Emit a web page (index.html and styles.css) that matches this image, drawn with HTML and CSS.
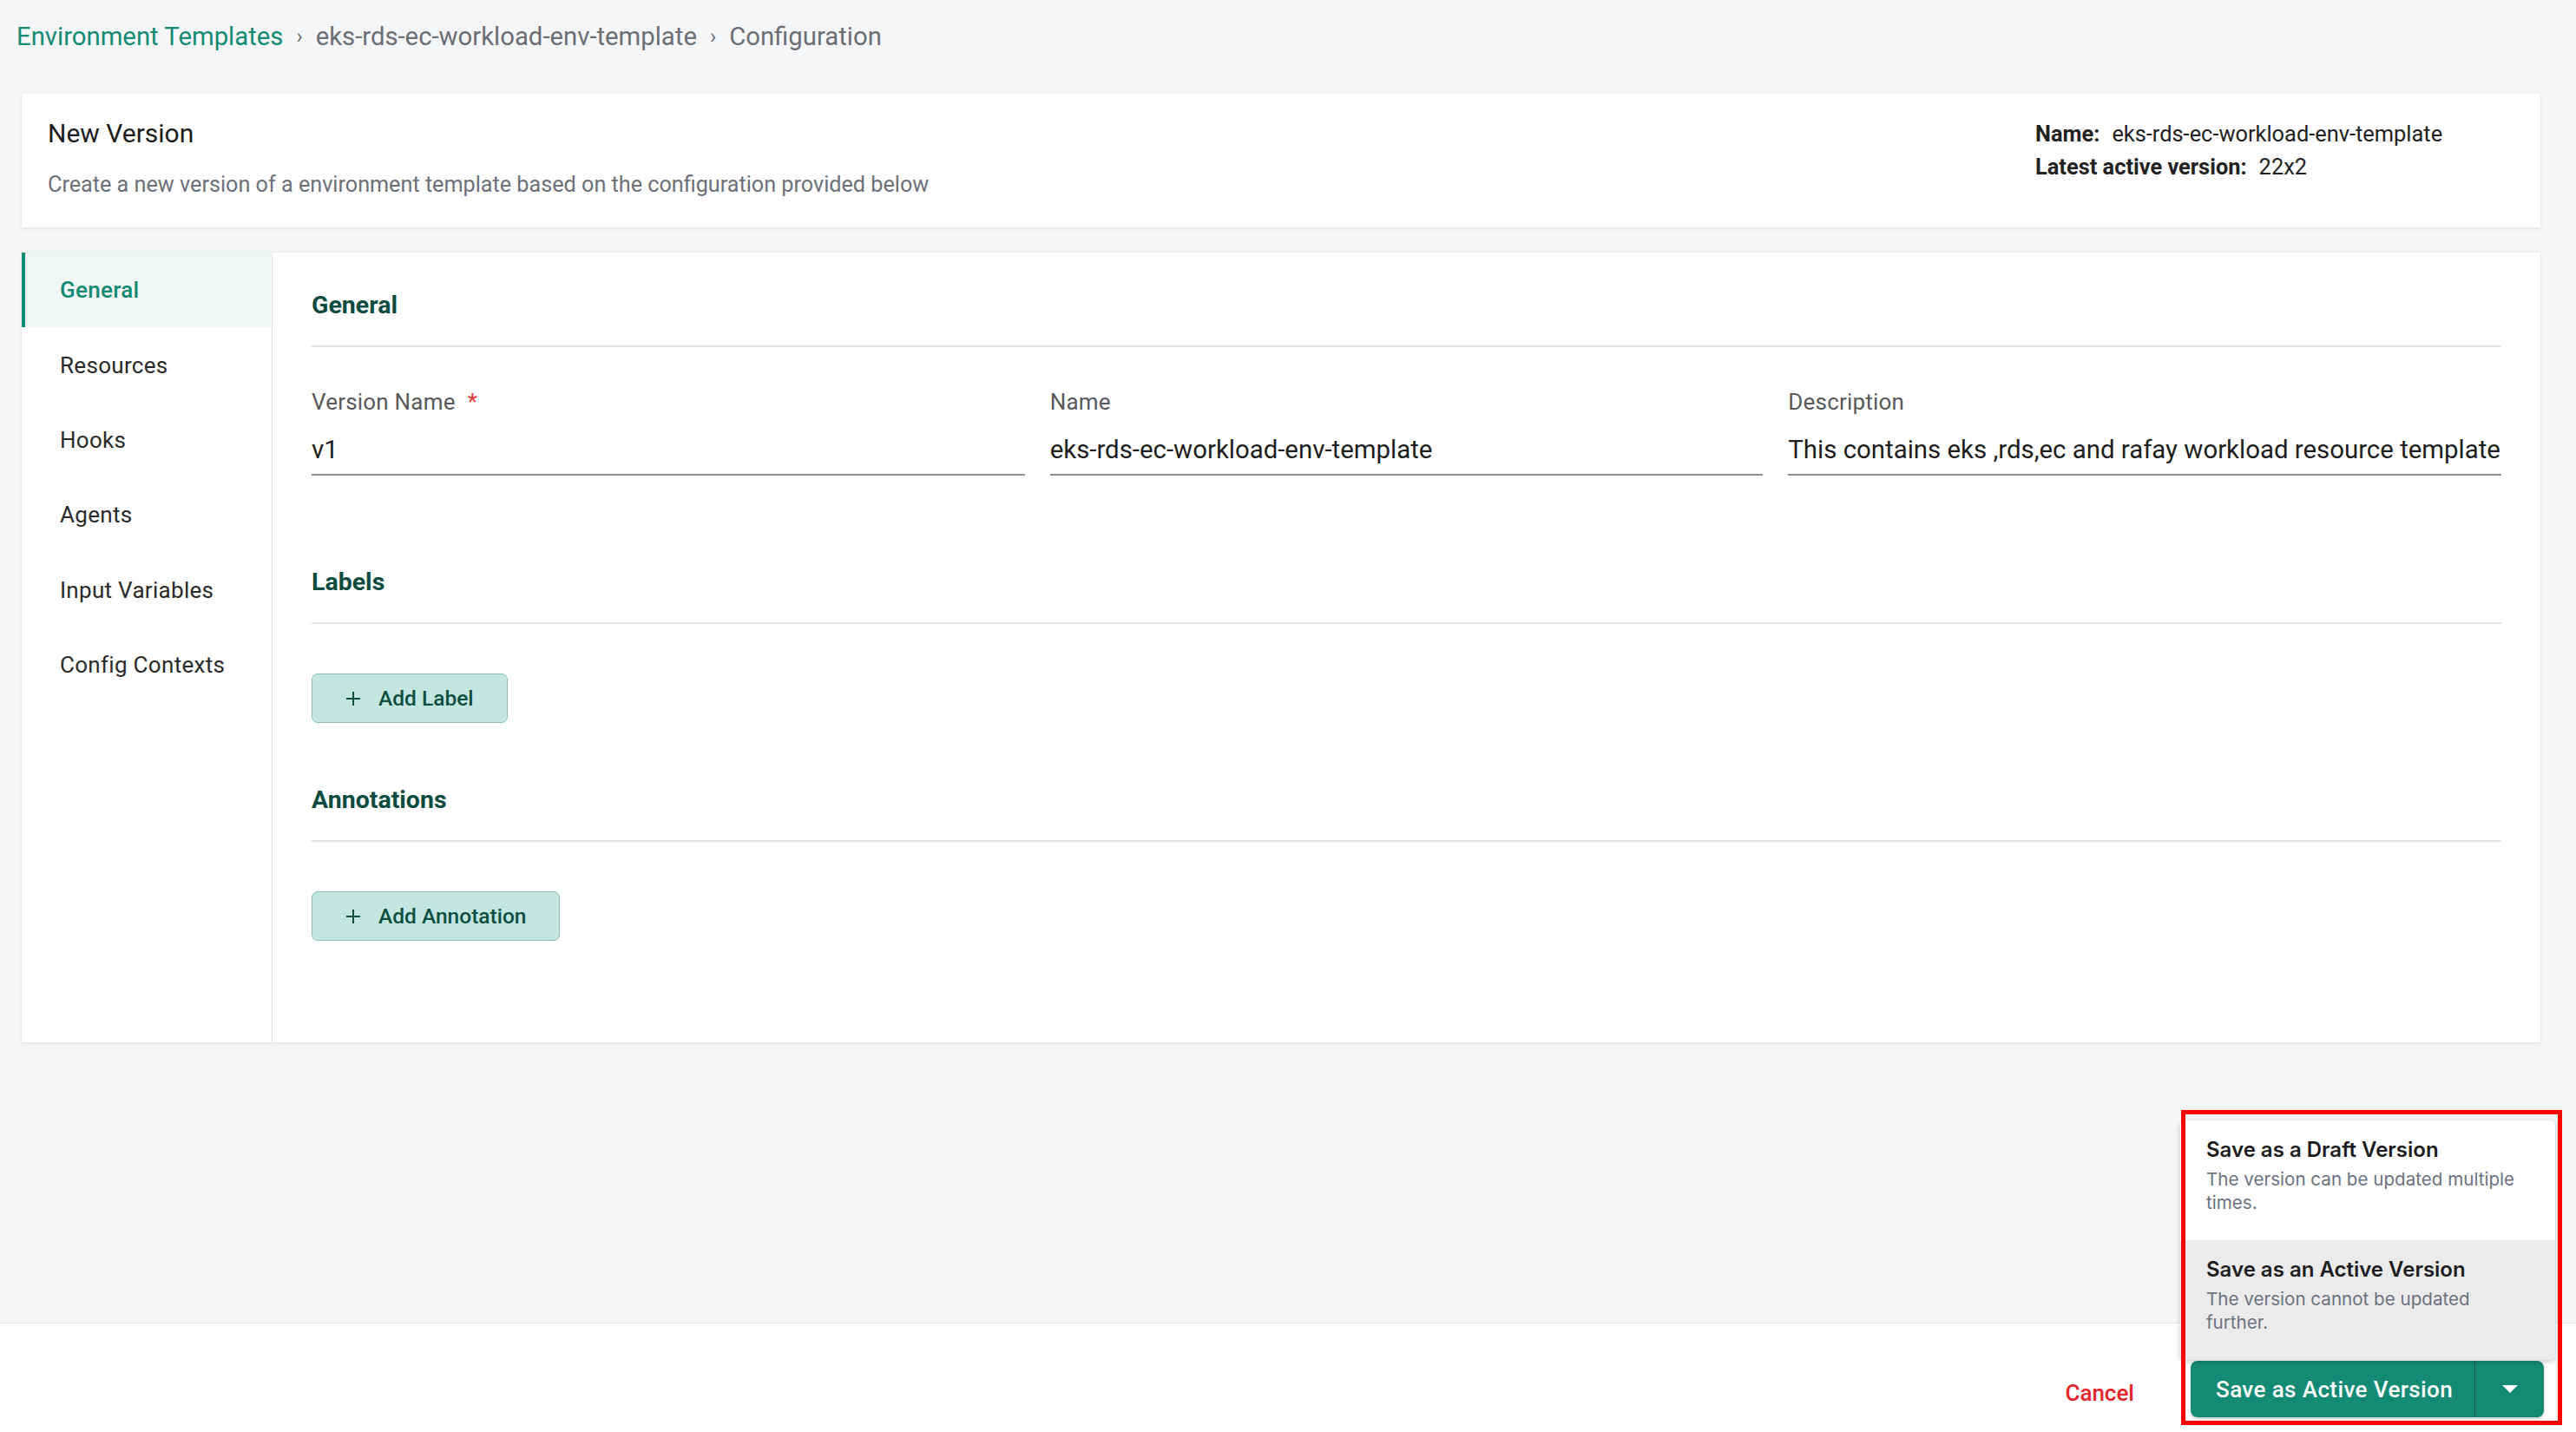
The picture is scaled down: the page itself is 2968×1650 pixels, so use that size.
FILE: index.html
```html
<!DOCTYPE html>
<html lang="en">
<head>
<meta charset="utf-8">
<title>New Version</title>
<link rel="stylesheet" href="styles.css">
</head>
<body>
<div class="page">
  <nav class="crumbs">
    <a class="crumb-link" href="#">Environment Templates</a><span class="sep">›</span><span class="crumb">eks-rds-ec-workload-env-template</span><span class="sep">›</span><span class="crumb">Configuration</span>
  </nav>
  <div class="cards">
    <section class="head-card">
      <div class="head-left">
        <h1 class="head-title">New Version</h1>
        <p class="head-sub">Create a new version of a environment template based on the configuration provided below</p>
      </div>
      <div class="head-info">
        <div class="info-line"><b>Name:</b>eks-rds-ec-workload-env-template</div>
        <div class="info-line"><b>Latest active version:</b>22x2</div>
      </div>
    </section>
    <section class="main-card">
      <aside class="side">
        <div class="side-item active">General</div>
        <div class="side-item">Resources</div>
        <div class="side-item">Hooks</div>
        <div class="side-item">Agents</div>
        <div class="side-item">Input Variables</div>
        <div class="side-item">Config Contexts</div>
      </aside>
      <div class="content">
        <h2 class="sec-title">General</h2>
        <div class="fields">
          <div class="field">
            <div class="field-label">Version Name<span class="req">*</span></div>
            <div class="field-input">v1</div>
          </div>
          <div class="field">
            <div class="field-label">Name</div>
            <div class="field-input">eks-rds-ec-workload-env-template</div>
          </div>
          <div class="field">
            <div class="field-label">Description</div>
            <div class="field-input">This contains eks ,rds,ec and rafay workload resource template</div>
          </div>
        </div>
        <h2 class="sec-title sec-gap">Labels</h2>
        <button class="add-btn"><svg class="plus" viewBox="0 0 18 18" width="18" height="18"><path d="M9 1v16M1 9h16" stroke="#0d4f41" stroke-width="2" fill="none"/></svg><span>Add Label</span></button>
        <h2 class="sec-title sec-gap2">Annotations</h2>
        <button class="add-btn"><svg class="plus" viewBox="0 0 18 18" width="18" height="18"><path d="M9 1v16M1 9h16" stroke="#0d4f41" stroke-width="2" fill="none"/></svg><span>Add Annotation</span></button>
      </div>
    </section>
  </div>
</div>
<footer class="footer">
  <button class="cancel">Cancel</button>
  <div class="split-wrap">
    <div class="menu">
      <div class="menu-item">
        <div class="menu-title">Save as a Draft Version</div>
        <div class="menu-desc">The version can be updated multiple times.</div>
      </div>
      <div class="menu-item hover">
        <div class="menu-title">Save as an Active Version</div>
        <div class="menu-desc">The version cannot be updated further.</div>
      </div>
    </div>
    <div class="split">
      <button class="split-main">Save as Active Version</button>
      <button class="split-caret"><span class="caret"></span></button>
    </div>
    <div class="highlight"></div>
  </div>
</footer>
</body>
</html>
```
FILE: styles.css
```css
* { box-sizing: border-box; }
html, body { margin: 0; padding: 0; }
body {
  width: 2968px;
  height: 1650px;
  background: #f5f6f8;
  font-family: Roboto, "Liberation Sans", Arial, sans-serif;
  color: #222;
  display: flex;
  flex-direction: column;
  overflow: hidden;
}
.page { flex: 1; }
.crumbs {
  padding: 22px 0 0 19px;
  font-size: 29.3px;
  line-height: 40px;
  color: #6b6f75;
  display: flex;
  align-items: center;
}
.crumb-link { color: #138a74; text-decoration: none; }
.sep { font-size: 24px; margin: 0 15px; color: #6b6f75; }
.cards { padding: 46px 41px 0 25px; }
.head-card {
  background: #fff;
  box-shadow: 0 1px 4px rgba(0,0,0,0.10);
  display: flex;
  justify-content: space-between;
  padding: 25px 30px 31px 30px;
}
.head-title {
  margin: 0;
  font-size: 30px;
  line-height: 40px;
  font-weight: 400;
  color: #1c1c1c;
  padding-top: 1px;
}
.head-sub {
  margin: 21px 0 0 0;
  font-size: 25.2px;
  line-height: 36px;
  color: #6b7079;
}
.head-info {
  width: 552px;
  font-size: 25.4px;
  line-height: 38px;
  color: #222;
  padding-top: 2px;
}
.info-line b { font-weight: 700; margin-right: 14px; }
.main-card {
  margin-top: 29px;
  background: #fff;
  box-shadow: 0 1px 4px rgba(0,0,0,0.10);
  display: flex;
  height: 910px;
}
.side {
  width: 289px;
  border-right: 1px solid #e4e4e4;
  flex: none;
}
.side-item {
  height: 86.4px;
  display: flex;
  align-items: center;
  padding-left: 44px;
  font-size: 26px;
  letter-spacing: 0.3px;
  color: #2a2a2a;
}
.side-item.active {
  background: #f1f7f6;
  border-left: 4px solid #138a74;
  padding-left: 40px;
  color: #138a74;
  font-weight: 500;
}
.content {
  flex: 1;
  min-width: 0;
  padding: 40px 45px 0 45px;
}
.sec-title {
  margin: 0;
  font-size: 28.5px;
  line-height: 42px;
  font-weight: 700;
  color: #0c4b3f;
  padding-bottom: 25px;
  border-bottom: 2px solid #e4e4e4;
}
.sec-gap { margin-top: 102px; }
.sec-gap2 { margin-top: 68px; }
.fields {
  display: grid;
  grid-template-columns: repeat(3, minmax(0, 1fr));
  column-gap: 29px;
  margin-top: 45px;
}
.field-label {
  font-size: 26px;
  line-height: 36px;
  color: #58595b;
  letter-spacing: 0.2px;
}
.req { color: #e53935; margin-left: 14px; }
.field-input {
  margin-top: 17px;
  font-size: 29.4px;
  line-height: 40px;
  color: #1e1e1e;
  padding-bottom: 8px;
  border-bottom: 2px solid #8f8f8f;
  white-space: nowrap;
  overflow: hidden;
}
.add-btn {
  margin-top: 57px;
  height: 57px;
  display: flex;
  align-items: center;
  padding: 0 38px;
  background: #c3e6e1;
  border: 1.5px solid #8dbfb7;
  border-radius: 7px;
  font-family: Roboto, "Liberation Sans", Arial, sans-serif;
  font-size: 24.5px;
  font-weight: 500;
  color: #0d4f41;
}
.plus { margin-right: 20px; }
.footer {
  height: 126px;
  flex: none;
  background: #fff;
  border-top: 1px solid #e9e9e9;
  display: flex;
  justify-content: flex-end;
  align-items: flex-start;
  padding: 43px 37px 0 0;
}
.cancel {
  background: none;
  border: none;
  padding: 0;
  margin: 19px 65px 0 0;
  font-family: Roboto, "Liberation Sans", Arial, sans-serif;
  font-size: 26px;
  font-weight: 500;
  line-height: 36px;
  color: #e5252a;
}
.split-wrap { position: relative; }
.split {
  display: flex;
  height: 65px;
  width: 407px;
  background: #138a74;
  border-radius: 8px;
  box-shadow: 0 2px 3px rgba(0,0,0,0.2);
  overflow: hidden;
}
.split-main {
  flex: 1;
  background: none;
  border: none;
  border-right: 1px solid rgba(0,0,0,0.3);
  color: #fff;
  font-family: Roboto, "Liberation Sans", Arial, sans-serif;
  font-size: 26px;
  font-weight: 500;
  letter-spacing: 0.4px;
  text-align: left;
  padding: 0 0 0 29px;
}
.split-caret {
  width: 79px;
  background: none;
  border: none;
  display: flex;
  align-items: center;
  justify-content: center;
  padding: 0;
}
.caret {
  width: 0; height: 0;
  border-left: 9px solid transparent;
  border-right: 9px solid transparent;
  border-top: 9px solid #fff;
}
.menu {
  position: absolute;
  left: -12px;
  right: -13px;
  bottom: 66px;
  background: #fff;
  border-radius: 6px;
  box-shadow: 0 2px 6px rgba(0,0,0,0.22);
  overflow: hidden;
  font-family: Inter, "Noto Sans", sans-serif;
}
.menu-item {
  height: 138px;
  padding: 18px 36px 0 30px;
}
.menu-item.hover { background: #ebebeb; }
.menu-title {
  font-size: 24px;
  line-height: 32px;
  font-weight: 600;
  color: #1d1d1f;
}
.menu-desc {
  margin-top: 4px;
  font-size: 20.6px;
  line-height: 27px;
  color: #6b7280;
}
.highlight {
  position: absolute;
  left: -11px;
  right: -21px;
  top: -289px;
  bottom: -9px;
  border: 5px solid #ff0000;
  pointer-events: none;
}
```
